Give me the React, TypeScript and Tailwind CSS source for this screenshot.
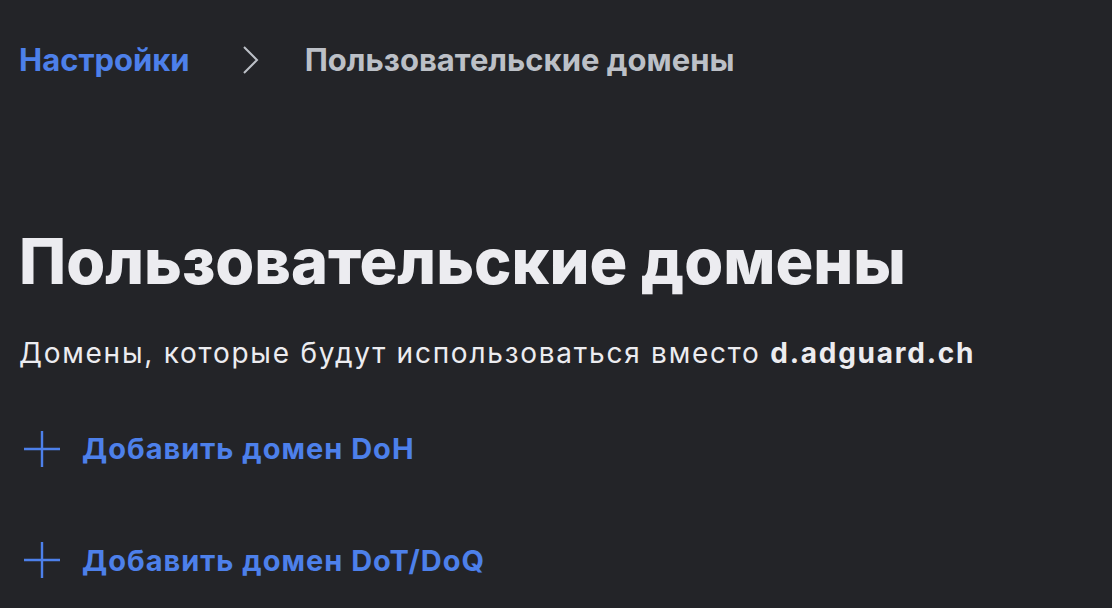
const font = { fontFamily: 'Inter, "Noto Sans", sans-serif' }

function PlusIcon() {
  return (
    <svg width="38" height="38" viewBox="0 0 38 38" className="shrink-0">
      <path d="M19 1v36M1 19h36" stroke="#4d80ea" strokeWidth="2.4" fill="none" />
    </svg>
  )
}

function Chevron() {
  return (
    <svg width="18" height="30" viewBox="0 0 18 30" className="ml-[51px] mr-[46px] shrink-0">
      <path d="M3 2l13 13L3 28" stroke="#bcc0c7" strokeWidth="2" fill="none" />
    </svg>
  )
}

function AddLink({ label }: { label: string }) {
  return (
    <button className="flex items-center gap-[21px] pl-[23px] text-left">
      <PlusIcon />
      <span className="text-[29px] font-bold tracking-[1px] text-[#4d80ea]">{label}</span>
    </button>
  )
}

export default function App() {
  return (
    <div className="h-[608px] w-[1112px] overflow-hidden bg-[#232428] pl-[19px]" style={font}>
      {/* Breadcrumbs */}
      <div className="flex h-[122px] items-center pb-[2px]">
        <span className="text-[31px] font-bold text-[#4d80ea]">Настройки</span>
        <Chevron />
        <span className="text-[31px] font-bold text-[#bcc0c7]">Пользовательские домены</span>
      </div>

      <h1 className="mt-[99px] text-[63px] font-extrabold leading-[80px] text-[#ececf0]">
        Пользовательские домены
      </h1>

      <p className="mt-[34px] text-[28px] leading-[36px] tracking-[1.75px] text-[#ececf0]">
        Домены, которые будут использоваться вместо <b className="font-bold">d.adguard.ch</b>
      </p>

      <div className="-ml-[19px] mt-[56px] flex flex-col gap-[68px]">
        <AddLink label="Добавить домен DoH" />
        <AddLink label="Добавить домен DoT/DoQ" />
      </div>
    </div>
  )
}
